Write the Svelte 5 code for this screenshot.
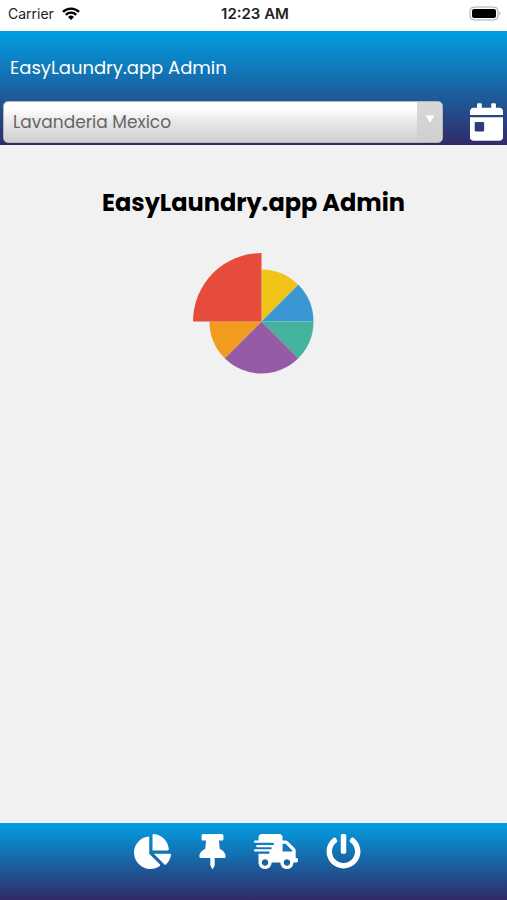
<script>
  let store = $state('Lavanderia Mexico');

  const tabs = [
    {
      label: 'Reports',
      width: 37,
      box: '0 0 544 512',
      path: 'M527.79 288H290.5l158.03 158.03c6.04 6.04 15.98 6.53 22.19.68 38.7-36.46 65.32-85.61 73.13-140.86 1.34-9.46-6.51-17.85-16.06-17.85zm-15.83-64.8C503.72 103.74 408.26 8.28 288.8.04 279.68-.59 272 7.1 272 16.24V240h223.77c9.14 0 16.82-7.68 16.19-16.8zM224 288V50.71c0-9.55-8.39-17.4-17.84-16.06C86.99 51.49-4.1 155.6.14 280.37 4.5 408.51 114.83 513.59 243.03 511.98c50.4-.63 96.97-16.87 135.26-44.03 7.9-5.6 8.42-17.23 1.57-24.08L224 288z'
    },
    {
      label: 'Pinned',
      width: 27,
      box: '0 0 384 512',
      path: 'M298.028 214.267L285.793 96H328c13.255 0 24-10.745 24-24V24c0-13.255-10.745-24-24-24H56C42.745 0 32 10.745 32 24v48c0 13.255 10.745 24 24 24h42.207L85.972 214.267C37.465 236.82 0 277.261 0 328c0 13.255 10.745 24 24 24h136v104.007c0 1.242.289 2.467.845 3.578l24 48c2.941 5.882 11.364 5.893 14.311 0l24-48a8.008 8.008 0 0 0 .845-3.578V352h136c13.255 0 24-10.745 24-24-.001-51.183-37.983-91.42-85.973-113.733z'
    },
    {
      label: 'Deliveries',
      width: 44,
      box: '0 0 640 512',
      path: 'M624 352h-16V243.9c0-12.7-5.1-24.9-14.1-33.9L494 110.1c-9-9-21.2-14.1-33.9-14.1H416V48c0-26.5-21.5-48-48-48H112C85.5 0 64 21.5 64 48v48H8c-4.4 0-8 3.6-8 8v16c0 4.4 3.6 8 8 8h272c4.4 0 8 3.6 8 8v16c0 4.4-3.6 8-8 8H40c-4.4 0-8 3.6-8 8v16c0 4.4 3.6 8 8 8h208c4.4 0 8 3.6 8 8v16c0 4.4-3.6 8-8 8H8c-4.4 0-8 3.6-8 8v16c0 4.4 3.6 8 8 8h208c4.4 0 8 3.6 8 8v16c0 4.4-3.6 8-8 8H64v128c0 53 43 96 96 96s96-43 96-96h128c0 53 43 96 96 96s96-43 96-96h48c8.8 0 16-7.2 16-16v-32c0-8.8-7.2-16-16-16zM160 464c-26.5 0-48-21.5-48-48s21.5-48 48-48 48 21.5 48 48-21.5 48-48 48zm320 0c-26.5 0-48-21.5-48-48s21.5-48 48-48 48 21.5 48 48-21.5 48-48 48zm80-208H416V144h44.1l99.9 99.9V256z'
    },
    {
      label: 'Log out',
      width: 35,
      box: '0 0 512 512',
      path: 'M400 54.1c63 45 104 118.6 104 201.9 0 136.8-110.8 247.7-247.5 248C120 504.3 8.2 393 8 256.4 7.9 173.1 48.9 99.3 111.8 54.2c11.7-8.3 28-4.8 35 7.7L162.6 90c5.9 10.5 3.1 23.8-6.6 31-41.5 30.8-68 79.6-68 134.9-.1 92.3 74.5 168.1 168 168.1 91.6 0 168.6-74.2 168-169.1-.3-51.8-24.7-101.8-68.1-134-9.7-7.2-12.4-20.5-6.5-30.9l15.8-28.1c7-12.4 23.2-16.1 34.8-7.8zM296 264V24c0-13.3-10.7-24-24-24h-32c-13.3 0-24 10.7-24 24v240c0 13.3 10.7 24 24 24h32c13.3 0 24-10.7 24-24z'
    }
  ];
</script>

<div class="screen">
  <div class="status">
    <div class="carrier">
      <span>Carrier</span>
      <svg width="18" height="13" viewBox="0 0 18 13" aria-hidden="true">
        <g fill="none" stroke="#000" stroke-width="2.4">
          <path d="M1 4.9a11.4 11.4 0 0 1 16 0" />
          <path d="M3.8 7.8a7.4 7.4 0 0 1 10.4 0" />
        </g>
        <path d="M9 13 6 9.900a4.300 4.300 0 0 1 6 0z" />
      </svg>
    </div>
    <span class="time">12:23 AM</span>
    <svg class="battery" width="33" height="15" viewBox="0 0 33 15" aria-hidden="true">
      <rect x="1" y="1" width="28" height="13" rx="4" fill="#fff" stroke="#aaa" />
      <rect x="3" y="3" width="24" height="9" rx="2" />
      <path d="M30.500 5.500q2 2 0 4z" fill="#999" />
    </svg>
  </div>

  <header>
    <div class="brand">EasyLaundry.app Admin</div>
    <div class="tools">
      <div class="picker">
        <select aria-label="Laundry" bind:value={store}>
          <option>Lavanderia Mexico</option>
        </select>
        <span class="arrow">
          <svg width="10" height="9" viewBox="0 0 10 9" aria-hidden="true">
            <path d="M0 0h10L5 9z" fill="#fff" stroke="#bbb" stroke-width=".5" />
          </svg>
        </span>
      </div>
      <button class="calendar" aria-label="Calendar">
        <svg width="33" height="38" viewBox="0 0 448 512" aria-hidden="true">
          <path d="M0 464c0 26.5 21.5 48 48 48h352c26.5 0 48-21.5 48-48V192H0v272zm64-192c0-8.8 7.2-16 16-16h96c8.8 0 16 7.2 16 16v96c0 8.8-7.2 16-16 16H80c-8.8 0-16-7.2-16-16v-96zM400 64h-48V16c0-8.8-7.2-16-16-16h-32c-8.8 0-16 7.2-16 16v48H160V16c0-8.800-7.200-16-16-16h-32c-8.800 0-16 7.200-16 16v48H48C21.500 64 0 85.500 0 112v48h448v-48c0-26.500-21.500-48-48-48z" />
        </svg>
      </button>
    </div>
  </header>

  <main>
    <h1>EasyLaundry.app Admin</h1>
    <svg width="121" height="121" viewBox="-68.500 -68.500 121 121" role="img" aria-label="Pie chart">
      <path fill="#f0c419" d="M0 0V-52A52 52 0 0 1 36.770-36.770z" />
      <path fill="#3b97d3" d="M0 0 36.770-36.770A52 52 0 0 1 52 0z" />
      <path fill="#45b29d" d="M0 0H52A52 52 0 0 1 36.770 36.770z" />
      <path fill="#955ba5" d="M0 0 36.770 36.770A52 52 0 0 1-36.770 36.770z" />
      <path fill="#f29c1f" d="M0 0-36.770 36.770A52 52 0 0 1-52 0z" />
      <path fill="#e64c3c" d="M0 0H-68.500A68.500 68.500 0 0 1 0-68.500z" />
    </svg>
  </main>

  <nav>
    {#each tabs as tab}
      <button aria-label={tab.label}>
        <svg width={tab.width} height="35" viewBox={tab.box} aria-hidden="true">
          <path d={tab.path} />
        </svg>
      </button>
    {/each}
  </nav>
</div>

<style>
  :global(body) {
    margin: 0;
  }
  .screen {
    display: flex;
    flex-direction: column;
    min-height: 100vh;
    background: #f1f1f1;
    font-family: Poppins, Inter, sans-serif;
  }
  svg {
    display: block;
  }
  button {
    padding: 0;
    border: 0;
    background: none;
    cursor: pointer;
  }
  button svg {
    fill: #fff;
  }
  .status {
    display: grid;
    grid-template-columns: 1fr auto 1fr;
    align-items: center;
    box-sizing: border-box;
    height: 31px;
    padding: 0 5px 4px 8px;
    background: #fff;
    color: #222;
    font-family: Inter, sans-serif;
    font-size: 14px;
  }
  .carrier {
    display: flex;
    align-items: center;
    gap: 8px;
  }
  .time {
    font-size: 15px;
    font-weight: 600;
  }
  .battery {
    justify-self: end;
  }
  header {
    box-sizing: border-box;
    height: 114px;
    background: linear-gradient(#009fe3, #312a66);
  }
  .brand {
    padding: 24px 10px 20px;
    color: #fff;
    font-size: 18px;
    line-height: 26px;
  }
  .tools {
    display: flex;
    align-items: center;
    gap: 27px;
    padding: 0 4px 0 3px;
  }
  .picker {
    position: relative;
    flex: 1;
  }
  select {
    display: block;
    width: 100%;
    height: 42px;
    padding: 0 34px 0 9px;
    border: 1px solid #b5b5b5;
    border-radius: 5px;
    background: linear-gradient(#fff 15%, #e8e8e8 50%, #cfd0ce);
    color: #666;
    font: inherit;
    font-size: 17px;
    appearance: none;
  }
  .arrow {
    position: absolute;
    inset: 1px 1px 1px auto;
    display: grid;
    place-items: center;
    width: 25px;
    padding-bottom: 5px;
    box-sizing: border-box;
    border-radius: 0 4px 4px 0;
    background: linear-gradient(#d8d8d8, #cfd0ce);
    pointer-events: none;
  }
  main {
    flex: 1;
    display: flex;
    flex-direction: column;
    align-items: center;
    gap: 32px;
    padding-top: 40px;
  }
  h1 {
    margin: 0;
    color: #000;
    font-size: 24px;
    font-weight: 700;
    line-height: 36px;
  }
  nav {
    display: flex;
    justify-content: center;
    gap: 28px;
    padding: 11px 12px 31px 0;
    background: linear-gradient(#009fe3, #312a66);
  }
</style>
